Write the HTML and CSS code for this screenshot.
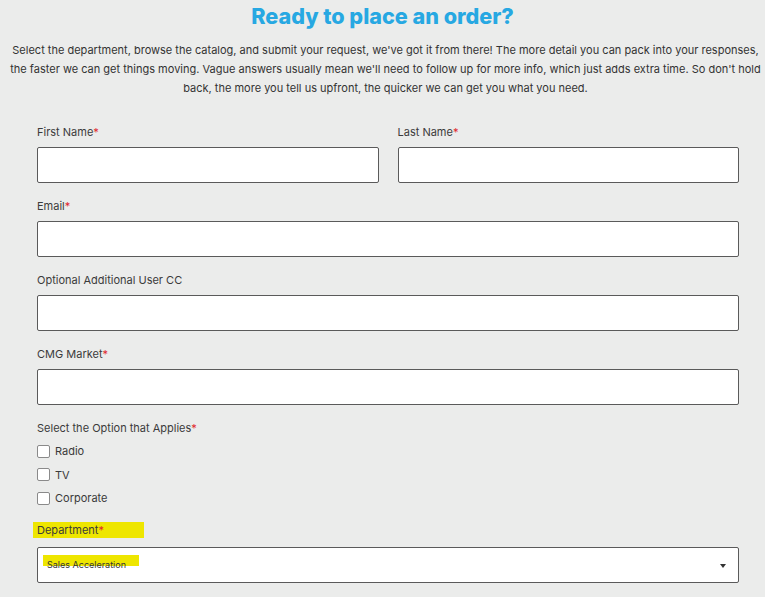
FILE: index.html
```html
<!DOCTYPE html>
<html lang="en">
<head>
    <meta charset="UTF-8">
    <meta name="viewport" content="width=device-width, initial-scale=1.0">
    <title>Ready to place an order?</title>
    <link rel="stylesheet" href="styles.css">
</head>
<body>

    <!-- Intro -->
    <h1 class="title">Ready to place an order?</h1>
    <p class="intro">Select the department, browse the catalog, and submit your request, we've got it from there! The more detail you can pack into your responses, the faster we can get things moving. Vague answers usually mean we'll need to follow up for more info, which just adds extra time. So don't hold back, the more you tell us upfront, the quicker we can get you what you need.</p>

    <!-- Order form -->
    <form class="order-form">
        <div class="row">
            <div class="field">
                <label class="label">First Name<span class="req">*</span></label>
                <input type="text" class="input">
            </div>
            <div class="field">
                <label class="label">Last Name<span class="req">*</span></label>
                <input type="text" class="input">
            </div>
        </div>

        <div class="field">
            <label class="label">Email<span class="req">*</span></label>
            <input type="email" class="input">
        </div>

        <div class="field">
            <label class="label">Optional Additional User CC</label>
            <input type="text" class="input">
        </div>

        <div class="field">
            <label class="label">CMG Market<span class="req">*</span></label>
            <input type="text" class="input">
        </div>

        <div class="field">
            <label class="label">Select the Option that Applies<span class="req">*</span></label>
            <div class="options">
                <label class="option"><span class="box"></span>Radio</label>
                <label class="option"><span class="box"></span>TV</label>
                <label class="option"><span class="box"></span>Corporate</label>
            </div>
        </div>

        <div class="field dept">
            <label class="label"><span class="mark">Department<span class="req">*</span></span></label>
            <div class="select">
                <span class="mark small">Sales Acceleration</span>
                <span class="arrow"></span>
            </div>
        </div>
    </form>

</body>
</html>
```

FILE: styles.css
```css
body {
    margin: 0;
    background-color: #ebeceb;
    font-family: "Inter", "Liberation Sans", sans-serif;
    color: #3a3a3a;
}
.title {
    margin: 3px 0 0;
    text-align: center;
    color: #27a8e2;
    font-size: 21.6px;
    font-weight: 800;
    line-height: 26px;
}
.intro {
    margin: 12px 0 0;
    padding: 0 4px 0 10px;
    text-align: center;
    font-size: 11px;
    line-height: 19px;
    color: #333;
}
.order-form {
    padding: 26px 26px 0 37px;
}
.row {
    display: flex;
    gap: 19px;
}
.row .field {
    flex: 1;
}
.field {
    margin-bottom: 15px;
}
.label {
    display: block;
    font-size: 11px;
    line-height: 16px;
    margin-bottom: 7px;
    color: #3b3b3b;
}
.req {
    color: #e0262b;
}
.input {
    box-sizing: border-box;
    display: block;
    width: 100%;
    height: 36px;
    border: 1px solid #5a5a5a;
    border-radius: 2px;
    background: #fff;
}
.options {
    display: flex;
    flex-direction: column;
    gap: 7.5px;
}
.option {
    display: flex;
    align-items: center;
    font-size: 11px;
    line-height: 16px;
}
.box {
    box-sizing: border-box;
    width: 13px;
    height: 13px;
    border: 1px solid #8a8a8a;
    border-radius: 2px;
    background: #fff;
    margin-right: 5px;
}
.dept {
    margin-top: 16px;
}
.dept .label {
    margin-left: -4px;
    margin-bottom: 9px;
}
.mark {
    background: #eee600;
    padding: 0 40px 0 4px;
    display: inline-block;
}
.select {
    box-sizing: border-box;
    position: relative;
    height: 36px;
    border: 1px solid #5a5a5a;
    border-radius: 2px;
    background: #fff;
    display: flex;
    align-items: flex-start;
}
.mark.small {
    font-size: 9px;
    line-height: 11px;
    padding: 4px 13px 0 4px;
    margin: 7px 0 0 5px;
    color: #333;
    background: linear-gradient(#eee600, #eee600) no-repeat;
    background-size: 100% 11px;
}
.arrow {
    position: absolute;
    right: 12px;
    top: 16px;
    width: 0;
    height: 0;
    border-left: 3px solid transparent;
    border-right: 3px solid transparent;
    border-top: 4px solid #333;
}
```
